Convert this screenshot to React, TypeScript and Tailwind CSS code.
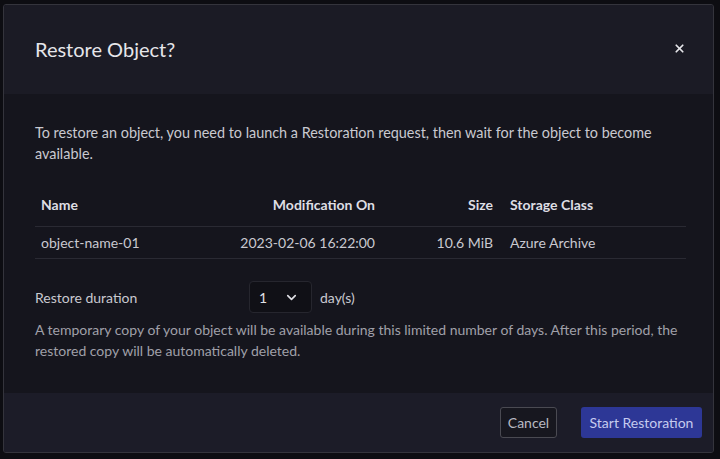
import { X, ChevronDown } from 'lucide-react'

const columns = [
  { label: 'Name', value: 'object-name-01', cls: 'w-[194px] px-[6px] text-left' },
  { label: 'Modification On', value: '2023-02-06 16:22:00', cls: 'w-[152px] px-[6px] text-right' },
  { label: 'Size', value: '10.6 MiB', cls: 'w-[118px] px-[6px] text-right' },
  { label: 'Storage Class', value: 'Azure Archive', cls: 'flex-1 pl-[11px] pr-[6px] text-left' },
]

export default function App() {
  return (
    <div
      className="w-[720px] h-[459px] bg-[#0d0d12] pt-[4px] pl-[3px] pr-[6px] pb-[6px] overflow-hidden"
      style={{ fontFamily: 'Lato, "Open Sans", sans-serif' }}
    >
      <div className="h-full flex flex-col border border-[#34343c] rounded-[3px] overflow-hidden bg-[#15151d]">
        {/* header */}
        <div className="h-[89px] shrink-0 flex items-center justify-between pl-[31px] pr-[27px] bg-[#1b1b25]">
          <div className="text-[20px] text-[#e6e6ea] leading-none pb-[2px]">Restore Object?</div>
          <X size={13} strokeWidth={3.2} className="text-[#e6e6ea] mb-[2px]" />
        </div>

        {/* body */}
        <div className="flex-1 pl-[31px] pr-[27px] pt-[28px] text-[14px] text-[#c9c9d0]">
          <p className="leading-[21px] text-[14.4px]">
            To restore an object, you need to launch a Restoration request, then wait for the object to become
            available.
          </p>

          <div className="mt-[23px]">
            <div className="flex border-b border-[#2a2a33] pt-[8px] pb-[11px] leading-[20px] font-bold text-[#dedee4]">
              {columns.map(c => (
                <div key={c.label} className={c.cls}>{c.label}</div>
              ))}
            </div>
            <div className="flex border-b border-[#2a2a33] h-[32px] items-center pb-[1px]">
              {columns.map(c => (
                <div key={c.label} className={c.cls}>{c.value}</div>
              ))}
            </div>
          </div>

          <div className="mt-[22px] flex items-center h-[32px]">
            <div className="w-[214px]">Restore duration</div>
            <div className="w-[63px] h-[32px] flex items-center justify-between pl-[9px] pr-[12px] bg-[#101016] border border-[#26262e] rounded-[4px] text-[#e0e0e6]">
              <span>1</span>
              <ChevronDown size={15} strokeWidth={2.6} />
            </div>
            <div className="ml-[8px]">day(s)</div>
          </div>

          <p className="mt-[6px] leading-[21px] text-[#a0a0a9]">
            A temporary copy of your object will be available during this limited number of days. After this period, the
            restored copy will be automatically deleted.
          </p>
        </div>

        {/* footer */}
        <div className="h-[59px] shrink-0 flex items-center justify-end gap-[24px] pr-[11px] bg-[#1c1c28] text-[14px]">
          <button className="h-[31px] w-[57px] border border-[#4a4a52] rounded-[3px] text-[#b9b9c2] bg-[#17171f]">
            Cancel
          </button>
          <button className="h-[31px] w-[121px] rounded-[3px] bg-[#2d3796] text-[#c5cbef]">
            Start Restoration
          </button>
        </div>
      </div>
    </div>
  )
}
